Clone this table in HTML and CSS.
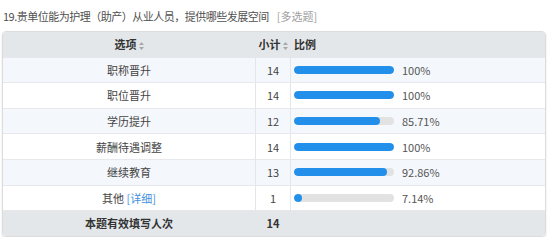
FILE: index.html
```html
<!DOCTYPE html>
<html lang="zh">
<head>
<meta charset="utf-8">
<link rel="stylesheet" href="styles.css">
</head>
<body>
<div class="title">19.贵单位能为护理（助产）从业人员，提供哪些发展空间<span class="qtype">[多选题]</span></div>
<table class="result">
  <colgroup><col class="c1"><col class="c2"><col class="c3"></colgroup>
  <thead>
    <tr><th class="center">选项<svg class="sort" viewBox="0 0 5 8" width="5" height="8"><path d="M2.5 0L5 3H0z M2.5 8L5 5H0z"/></svg></th><th class="center">小计<svg class="sort" viewBox="0 0 5 8" width="5" height="8"><path d="M2.5 0L5 3H0z M2.5 8L5 5H0z"/></svg></th><th class="left">比例</th></tr>
  </thead>
  <tbody>
    <tr class="odd"><td class="center">职称晋升</td><td class="center">14</td><td><div class="ratio"><div class="track"><div class="fill" style="width:100%"></div></div><span class="pct">100%</span></div></td></tr>
    <tr><td class="center">职位晋升</td><td class="center">14</td><td><div class="ratio"><div class="track"><div class="fill" style="width:100%"></div></div><span class="pct">100%</span></div></td></tr>
    <tr class="odd"><td class="center">学历提升</td><td class="center">12</td><td><div class="ratio"><div class="track"><div class="fill" style="width:85.71%"></div></div><span class="pct">85.71%</span></div></td></tr>
    <tr><td class="center">薪酬待遇调整</td><td class="center">14</td><td><div class="ratio"><div class="track"><div class="fill" style="width:100%"></div></div><span class="pct">100%</span></div></td></tr>
    <tr class="odd"><td class="center">继续教育</td><td class="center">13</td><td><div class="ratio"><div class="track"><div class="fill" style="width:92.86%"></div></div><span class="pct">92.86%</span></div></td></tr>
    <tr><td class="center">其他 <a class="detail">[详细]</a></td><td class="center">1</td><td><div class="ratio"><div class="track"><div class="fill" style="width:7.14%"></div></div><span class="pct">7.14%</span></div></td></tr>
    <tr class="total"><td class="center">本题有效填写人次</td><td class="center">14</td><td></td></tr>
  </tbody>
</table>
</body>
</html>
```
FILE: styles.css
```css
html, body {
  margin: 0;
  padding: 0;
  background: #ffffff;
}
body {
  font-family: "Noto Sans CJK SC", "Liberation Sans", sans-serif;
  font-size: 11px;
  color: #444;
}
.title {
  padding: 8px 0 0 3px;
  height: 23px;
  line-height: 17px;
  font-size: 11px;
  letter-spacing: -0.5px;
  color: #505050;
  white-space: nowrap;
}
.qtype {
  color: #a0a0a0;
  margin-left: 8px;
  letter-spacing: 0;
}
.result {
  margin-left: 2px;
  width: 544px;
  border-collapse: separate;
  border-spacing: 0;
  border: 1px solid #dcdcdc;
  border-radius: 4px;
  overflow: hidden;
  box-shadow: 0 1px 2px rgba(0,0,0,0.12);
  table-layout: fixed;
}
.c1 { width: 253px; }
.c2 { width: 35px; }
.c3 { width: auto; }
th, td {
  height: 24.6px;
  padding: 0;
  border-right: 1px solid #e3e6ea;
  border-bottom: 1px solid #e6e8eb;
  vertical-align: middle;
  font-weight: normal;
}
th:last-child, td:last-child { border-right: none; }
tbody tr:last-child td { border-bottom: none; }
thead th {
  background: #e4e7ea;
  font-weight: bold;
  color: #333;
}
.center { text-align: center; }
.left { text-align: left; padding-left: 3px; }
.sort {
  fill: #a8a8a8;
  margin-left: 2px;
  vertical-align: -1px;
}
tr.odd td { background: #f4f7fb; }
tr.total td {
  background: #e4e7ea;
  font-weight: bold;
  color: #333;
}
.ratio {
  display: flex;
  align-items: center;
  padding-left: 3px;
  gap: 8px;
}
.track {
  width: 100px;
  height: 8px;
  border-radius: 4px;
  background: #e2e2e2;
  overflow: hidden;
}
.fill {
  height: 8px;
  min-width: 8px;
  border-radius: 4px;
  background: #2290ea;
}
.pct { color: #555; }
.detail { color: #3f8fe0; }
```
